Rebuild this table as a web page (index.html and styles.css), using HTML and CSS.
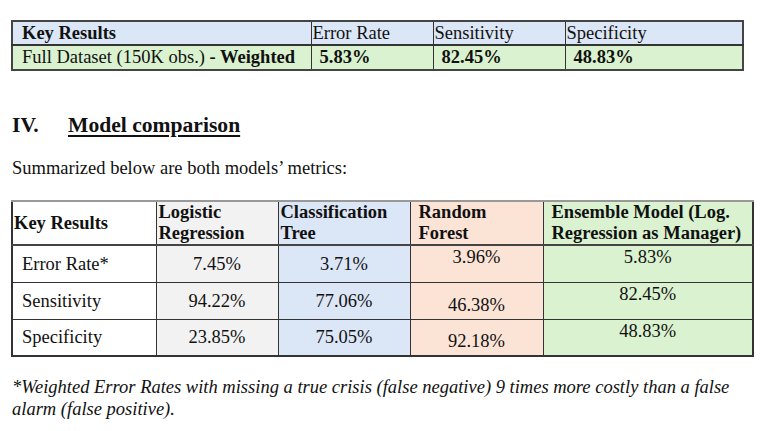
FILE: index.html
```html
<!DOCTYPE html>
<html>
<head>
<meta charset="utf-8">
<link rel="stylesheet" href="styles.css">
</head>
<body>
<div class="page">
  <table class="summary">
    <colgroup>
      <col class="c1"><col class="c2"><col class="c3"><col class="c4">
    </colgroup>
    <tr class="head">
      <td class="label"><b>Key Results</b></td>
      <td class="tight">Error Rate</td>
      <td class="tight">Sensitivity</td>
      <td class="tight">Specificity</td>
    </tr>
    <tr class="row">
      <td class="label">Full Dataset (150K obs.) <b>- Weighted</b></td>
      <td class="val"><b>5.83%</b></td>
      <td class="val"><b>82.45%</b></td>
      <td class="val"><b>48.83%</b></td>
    </tr>
  </table>

  <h2 class="section"><span class="num">IV.</span><span class="title">Model comparison</span></h2>

  <p class="intro">Summarized below are both models’ metrics:</p>

  <table class="compare">
    <colgroup>
      <col class="k1"><col class="k2"><col class="k3"><col class="k4"><col class="k5">
    </colgroup>
    <tr class="hrow">
      <th class="kr">Key Results</th>
      <th class="gray hd">Logistic<br>Regression</th>
      <th class="blue hd">Classification<br>Tree</th>
      <th class="peach hd pad">Random<br>Forest</th>
      <th class="green hd pad">Ensemble Model (Log.<br>Regression as Manager)</th>
    </tr>
    <tr class="r1">
      <td class="name">Error Rate*</td>
      <td class="gray num">7.45%</td>
      <td class="blue num">3.71%</td>
      <td class="peach num top">3.96%</td>
      <td class="green num top">5.83%</td>
    </tr>
    <tr class="r2">
      <td class="name">Sensitivity</td>
      <td class="gray num">94.22%</td>
      <td class="blue num">77.06%</td>
      <td class="peach num low">46.38%</td>
      <td class="green num top">82.45%</td>
    </tr>
    <tr class="r3">
      <td class="name">Specificity</td>
      <td class="gray num">23.85%</td>
      <td class="blue num">75.05%</td>
      <td class="peach num low">92.18%</td>
      <td class="green num top">48.83%</td>
    </tr>
  </table>

  <p class="note">*Weighted Error Rates with missing a true crisis (false negative) 9 times more costly than a false alarm (false positive).</p>
</div>
</body>
</html>
```

FILE: styles.css
```css
html, body {
  margin: 0;
  padding: 0;
  background: #ffffff;
}
body {
  font-family: "Liberation Serif", "Times New Roman", serif;
  font-size: 18.5px;
  color: #111111;
}
.page {
  padding: 20px 0 0 11px;
}

/* top summary table */
.summary {
  border-collapse: collapse;
  table-layout: fixed;
  width: 731px;
  border: 2px solid #444;
}
.summary .c1 { width: 299px; }
.summary .c2 { width: 122px; }
.summary .c3 { width: 132px; }
.summary .c4 { width: 178px; }
.summary td {
  border: 1px solid #333;
  padding: 0;
  line-height: 21px;
  white-space: nowrap;
  overflow: hidden;
}
.summary .head td {
  background: #dbe6f6;
  height: 22px;
}
.summary .row td {
  background: #daf2d0;
  height: 23px;
  border-top: 2px solid #333;
}
.summary .label { padding-left: 9px; }
.summary .tight { padding-left: 1px; }
.summary .val { padding-left: 8px; }

/* heading */
.section {
  margin: 42px 0 0 1px;
  font-size: 21.6px;
  line-height: 25px;
  font-weight: bold;
  display: flex;
}
.section .num {
  width: 56px;
}
.section .title {
  text-decoration: underline;
  text-decoration-thickness: 2px;
  text-underline-offset: 3px;
}

.intro {
  margin: 20px 0 0 1px;
  line-height: 21px;
}

/* comparison table */
.compare {
  margin-top: 21px;
  border-collapse: collapse;
  table-layout: fixed;
  width: 741px;
  border: 2px solid #333;
  border-top: 2px solid #999;
}
.compare .k1 { width: 144px; }
.compare .k2 { width: 122px; }
.compare .k3 { width: 132px; }
.compare .k4 { width: 133px; }
.compare .k5 { width: 210px; }
.compare th, .compare td {
  border: 1px solid #333;
  padding: 0;
  line-height: 21px;
}
.compare .hrow th {
  height: 41px;
  text-align: left;
  vertical-align: top;
  padding: 0 2px;
  border-top: 2px solid #999;
  border-bottom: 2px solid #444;
  white-space: nowrap;
}
.compare .hrow th.kr {
  vertical-align: middle;
  padding-left: 1px;
  background: #ffffff;
}
.compare .hrow th.pad { padding-left: 8px; }
.compare .r1 td { height: 36px; }
.compare .r2 td { height: 36px; }
.compare .r3 td { height: 35px; }
.compare .name {
  padding-left: 9px;
  vertical-align: middle;
}
.compare .num {
  text-align: center;
  vertical-align: middle;
}
.compare .num.top {
  vertical-align: top;
  line-height: 23px;
}
.compare .num.low {
  vertical-align: bottom;
  line-height: 28px;
}
.compare .gray { background: #f2f2f2; }
.compare .blue { background: #dbe6f6; }
.compare .peach { background: #fbe3d6; }
.compare .green { background: #daf2d0; }

.note {
  margin: 19px 0 0 1px;
  width: 745px;
  font-style: italic;
  line-height: 22px;
}
```
